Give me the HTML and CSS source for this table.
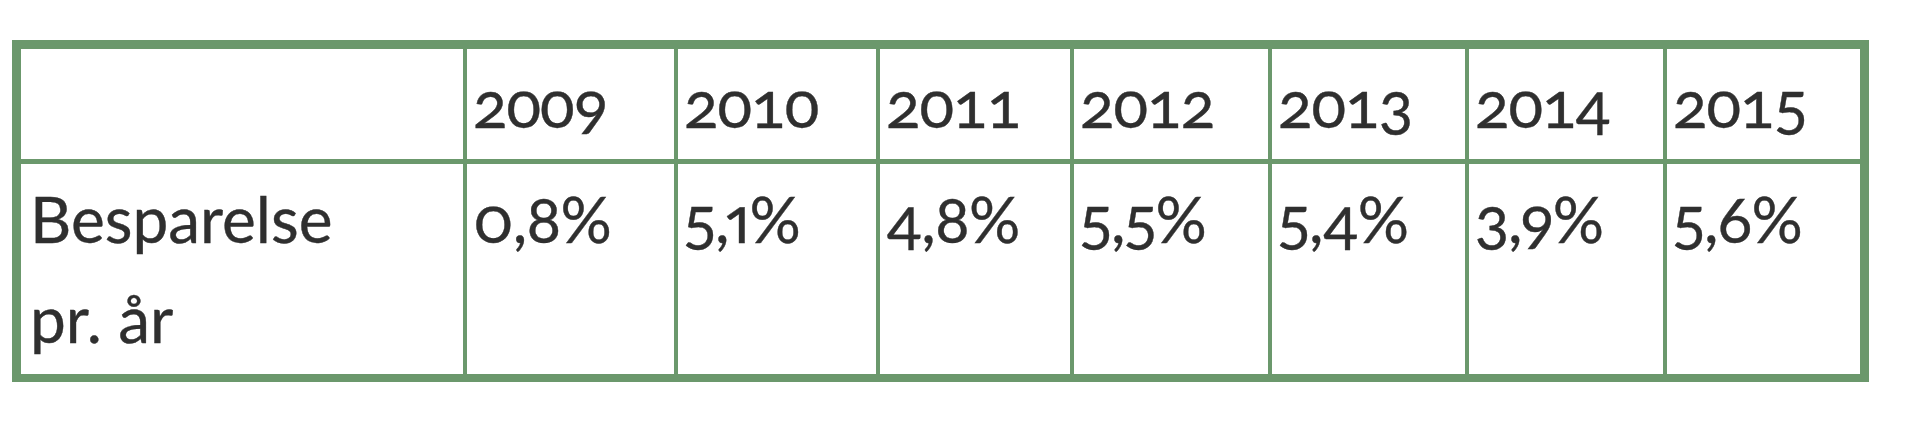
FILE: index.html
```html
<!DOCTYPE html>
<html lang="da">
<head>
<meta charset="utf-8">
<title>Besparelse pr. år</title>
<link rel="stylesheet" href="styles.css">
</head>
<body>
<table class="savings">
  <colgroup>
    <col class="c-label">
    <col class="c-2009">
    <col class="c-2010">
    <col class="c-2011">
    <col class="c-2012">
    <col class="c-2013">
    <col class="c-2014">
    <col class="c-2015">
  </colgroup>
  <tr class="head">
    <td></td>
    <td>2009</td>
    <td>2010</td>
    <td>2011</td>
    <td>2012</td>
    <td>2013</td>
    <td>2014</td>
    <td>2015</td>
  </tr>
  <tr class="body">
    <td>Besparelse<br>pr. år</td>
    <td>0,8%</td>
    <td>5,1%</td>
    <td>4,8%</td>
    <td>5,5%</td>
    <td>5,4%</td>
    <td>3,9%</td>
    <td>5,6%</td>
  </tr>
</table>
</body>
</html>
```

FILE: styles.css
```css
html, body {
  margin: 0;
  background: #ffffff;
}

body {
  padding: 40px 0 0 12px;
  font-family: Lato, "Open Sans", "Liberation Sans", sans-serif;
  color: #2f2f2f;
}

.savings {
  border-collapse: separate;
  border-spacing: 0;
  table-layout: fixed;
  width: 1857px;
  border: 9px solid #6b986c;
  border-bottom-width: 8px;
}

.c-label { width: 446px; }
.c-2009 { width: 211px; }
.c-2010 { width: 202px; }
.c-2011 { width: 194px; }
.c-2012 { width: 198px; }
.c-2013 { width: 197px; }
.c-2014 { width: 198px; }
.c-2015 { width: 193px; }

.savings td {
  vertical-align: top;
  padding: 5px 6px;
  font-size: 64px;
  line-height: 100px;
  font-variant-numeric: oldstyle-nums tabular-nums;
  border-right: 4px solid #6b986c;
  border-bottom: 5px solid #6b986c;
  white-space: nowrap;
  -webkit-text-stroke: 0.4px #2f2f2f;
}

.savings td:last-child {
  border-right: 0;
}

.savings tr:last-child td {
  border-bottom: 0;
}

.head td {
  height: 100px;
  letter-spacing: -1px;
}

.body td {
  font-variant-numeric: oldstyle-nums proportional-nums;
  letter-spacing: -1px;
}

.body td:first-child {
  padding-left: 9px;
  letter-spacing: 0;
}
```
